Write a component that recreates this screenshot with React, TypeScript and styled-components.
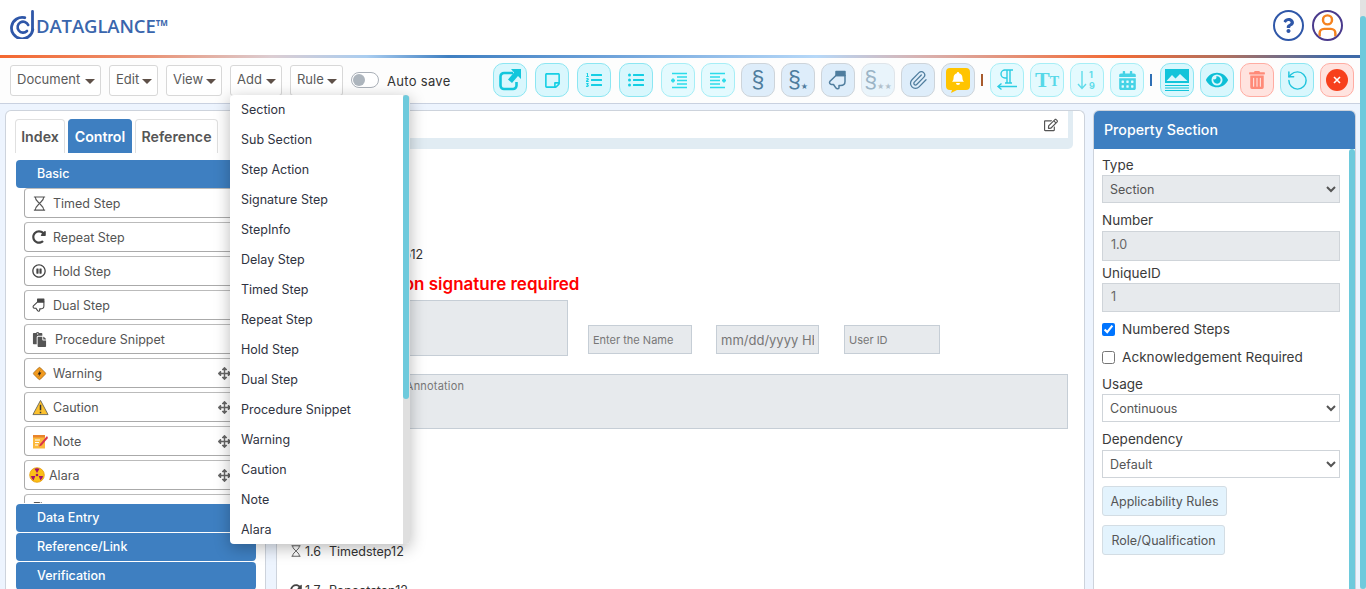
import React from "react";
import styled, { createGlobalStyle } from "styled-components";
import {
  FaArrowsAlt,
  FaCalendarAlt,
  FaEye,
  FaFile,
  FaListOl,
  FaListUl,
  FaPaste,
  FaQuestion,
  FaRedoAlt,
  FaRegEdit,
  FaRegPauseCircle,
  FaRegStickyNote,
  FaTrashAlt,
} from "react-icons/fa";
import { Paperclip, RotateCcw, User } from "lucide-react";

const GlobalStyle = createGlobalStyle`
  html, body { margin: 0; height: 100%; overflow: hidden; }
  body { font-family: Inter, "Open Sans", sans-serif; color: #333; background: #fff; }
  * { box-sizing: border-box; }
`;

const Shell = styled.div`
  position: relative;
  height: 100vh;
  overflow: hidden;
  padding-right: 6px;
  background: #edf4fe;
`;

/* scrollbars are overlays so they show in every browser mode */
const ScrollTrack = styled.div<{ $bg: string; $top?: number; $w: number }>`
  position: absolute;
  z-index: 5;
  top: ${(p) => p.$top ?? 0}px;
  right: 0;
  bottom: 0;
  width: ${(p) => p.$w}px;
  background: ${(p) => p.$bg};
`;

const ScrollThumb = styled.div<{ $from: number; $h: number }>`
  margin-top: ${(p) => p.$from}px;
  width: 6px;
  height: ${(p) => p.$h}px;
  background: #6ecadc;
  border-radius: 3px;
`;

const TopBar = styled.header`
  height: 58px;
  background: #fff;
  display: flex;
  align-items: center;
  justify-content: space-between;
  padding: 0 17px 6px 10px;
  border-bottom: 3px solid;
  border-image: linear-gradient(
      90deg,
      #f4672f 0,
      #ea9274 11%,
      #dccdd2 20%,
      #a9cdf0 27%,
      #3f7fc1 33%,
      #6fa3da 45%,
      #b6d8f8 60%,
      #d9b0ae 68%,
      #f26a35 82%,
      #b0705f 90%,
      #3f6aa8 98%
    )
    1;
`;

const Brand = styled.div`
  display: flex;
  align-items: center;
  gap: 1px;
`;

const BrandName = styled.span`
  font-family: "Open Sans", sans-serif;
  font-size: 18.5px;
  font-weight: 600;
  color: #3a66ad;
  letter-spacing: -0.1px;
  margin-top: 2px;
  sup { font-size: 8px; font-weight: 700; vertical-align: 7px; line-height: 0; }
`;

const TopActions = styled.div`
  display: flex;
  gap: 8px;
  margin-top: 1px;
`;

const RoundIcon = styled.div<{ $ring: string }>`
  width: 31px;
  height: 31px;
  border-radius: 50%;
  border: 2px solid ${(p) => p.$ring};
  display: flex;
  align-items: center;
  justify-content: center;
  overflow: hidden;
`;

const Toolbar = styled.div`
  height: 46px;
  background: #fdfdfd;
  border-bottom: 1px solid #c9d1e0;
  display: flex;
  align-items: center;
  padding: 0 6px 1px 10px;
`;

const MenuWrap = styled.div`
  position: relative;
  margin-right: 8px;
`;

const MenuButton = styled.button<{ $w: number }>`
  width: ${(p) => p.$w}px;
  height: 31px;
  background: #fff;
  border: 1px solid #d8d8d8;
  border-radius: 3px;
  font: 400 13px Inter, sans-serif;
  color: #5a5a5a;
  display: flex;
  align-items: center;
  justify-content: space-between;
  padding: 0 5px 2px 6px;
  &::after {
    content: "";
    border: 5px solid transparent;
    border-top-color: #5e5048;
    border-bottom-width: 0;
    margin-top: 4px;
  }
`;

const MenuPanel = styled.div`
  position: absolute;
  z-index: 10;
  top: 30px;
  left: 0;
  width: 180px;
  height: 449px;
  background: #fff;
  border-radius: 4px;
  box-shadow: 0 4px 16px rgba(0, 0, 0, 0.28);
  overflow: hidden;
`;

const MenuItem = styled.div`
  height: 30px;
  line-height: 29px;
  padding-left: 11px;
  font-size: 12.5px;
  color: #2f3341;
`;

const Toggle = styled.div`
  width: 28px;
  height: 16px;
  border: 1px solid #aab0b8;
  border-radius: 8px;
  background: #fff;
  padding: 1px;
  &::before {
    content: "";
    display: block;
    width: 12px;
    height: 12px;
    border-radius: 50%;
    background: #adb5bd;
  }
`;

const ToggleLabel = styled.span`
  margin-left: 8px;
  font-size: 13px;
  color: #333;
  letter-spacing: 0.3px;
  margin-top: 1px;
`;

const ToolRow = styled.div`
  margin-left: auto;
  display: flex;
  align-items: center;
  gap: 6px;
`;

const ToolGroup = styled.div`
  display: flex;
  gap: 8px;
`;

const palette = {
  cyan: ["#d9f7fd", "#8ce6f2"],
  pale: ["#e4fafe", "#a6eef6"],
  blue: ["#deedfa", "#cdd4da"],
  faded: ["#e9f4fb", "#dfe5ea"],
  red: ["#ffe3df", "#ffaca2"],
};

const ToolButton = styled.div<{ $kind: keyof typeof palette; $color?: string }>`
  width: 34px;
  height: 34px;
  border-radius: 10px;
  background: ${(p) => palette[p.$kind][0]};
  border: 1px solid ${(p) => palette[p.$kind][1]};
  color: ${(p) => p.$color || "#15cfe4"};
  display: flex;
  align-items: center;
  justify-content: center;
`;

const Separator = styled.span<{ $color: string; $after: number }>`
  width: 2px;
  height: 12px;
  background: ${(p) => p.$color};
  margin-right: ${(p) => p.$after}px;
`;

const SectionGlyph = styled.span<{ $fade?: boolean }>`
  font-family: "Liberation Sans", sans-serif;
  font-size: 23px;
  line-height: 1;
  color: ${(p) => (p.$fade ? "#9bb4c6" : "#4f7d9e")};
`;

const Stars = styled.span<{ $fade?: boolean }>`
  font-size: 7px;
  line-height: 1;
  align-self: flex-end;
  margin-bottom: 6px;
  color: ${(p) => (p.$fade ? "#b2c1cc" : "#4f7d9e")};
`;

const TextGlyph = styled.span<{ $size: number }>`
  font-family: "Liberation Serif", serif;
  font-weight: 700;
  font-size: ${(p) => p.$size}px;
  line-height: 1;
  margin-top: ${(p) => (22 - p.$size) / 2.4}px;
  color: #55d8e8;
`;

const Main = styled.main`
  height: 487px;
  padding: 6px 0 0 5px;
  display: grid;
  grid-template-columns: 261px 809px 261px;
  column-gap: 10px;
  grid-template-rows: 481px;
  & > :last-child { margin-left: -2px; }
`;

const Panel = styled.section`
  position: relative;
  background: #fff;
  border: 1px solid #cdd3dc;
  border-bottom: 0;
  border-radius: 6px 6px 0 0;
  overflow: hidden;
  display: flex;
  flex-direction: column;
`;

const Tabs = styled.div`
  display: flex;
  gap: 3px;
  padding: 8px 0 0 9px;
  margin-bottom: 7px;
`;

const Tab = styled.div<{ $active?: boolean; $w: number }>`
  width: ${(p) => p.$w}px;
  height: 34px;
  line-height: 34px;
  text-align: center;
  font-size: 14.2px;
  font-weight: 600;
  border-radius: 4px 4px 0 0;
  border: 1px solid ${(p) => (p.$active ? "#3e7fc1" : "#e0e0e0")};
  border-bottom: 0;
  background: ${(p) => (p.$active ? "#3e7fc1" : "#fff")};
  color: ${(p) => (p.$active ? "#fff" : "#555")};
`;

const Accordion = styled.div`
  flex: 1;
  min-height: 0;
  margin: 0 9px 1px 10px;
  display: flex;
  flex-direction: column;
  gap: 1px;
`;

const AccordionHead = styled.div`
  flex: none;
  height: 28px;
  line-height: 28px;
  padding-left: 21px;
  background: #3e7fc1;
  color: #fff;
  font-size: 12.5px;
  font-weight: 500;
  border-radius: 4px;
`;

const ControlList = styled.div`
  flex: 1;
  min-height: 0;
  overflow: hidden;
  margin-top: -1px;
  padding: 0 16px 0 8px;
  display: flex;
  flex-direction: column;
  gap: 4px;
`;

const ControlItem = styled.div<{ $icon?: number; $gap?: number }>`
  flex: none;
  height: 30px;
  border: 1px solid #aaa;
  border-top-color: #bbb;
  border-radius: 4px;
  display: flex;
  align-items: center;
  padding: 0 8px 0 ${(p) => (p.$icon === 18 ? 4 : 7)}px;
  font-size: 12.5px;
  color: #555;
  & > svg:first-child { flex: none; }
  & > span { margin-left: ${(p) => p.$gap ?? 7}px; flex: 1; }
`;

const CenterPanel = styled(Panel)`
  padding: 0 16px 0 13px;
`;

const DocHeader = styled.div`
  flex: none;
  height: 38px;
  margin: 0 -5px 0 -13px;
  padding: 0 5px 11px 0;
  background: #e1ecf3;
  border-radius: 0 0 5px 0;
`;

const DocHeaderInner = styled.div`
  height: 27px;
  background: #fff;
  display: flex;
  align-items: center;
  justify-content: flex-end;
  padding-right: 10px;
  color: #555;
  font-size: 14px;
`;

const StepRow = styled.div<{ $top: number }>`
  flex: none;
  height: 20px;
  margin-top: ${(p) => p.$top}px;
  display: flex;
  align-items: center;
  font-size: 12.5px;
  color: #333;
  & > svg { width: 12px; margin-right: 3px; flex: none; }
`;

const StepNumber = styled.span`
  width: 24px;
`;

const RequiredNote = styled.div`
  flex: none;
  margin-top: 8px;
  height: 24px;
  line-height: 24px;
  font-size: 17px;
  font-weight: 600;
  color: #f00;
  padding-left: 40px;
`;

const SignRow = styled.div`
  flex: none;
  margin-top: 4px;
  display: flex;
  align-items: flex-end;
`;

const SignBox = styled.div`
  width: 278px;
  height: 56px;
  background: #e7eaed;
  border: 1px solid #c6ced6;
`;

const SignInput = styled.input<{ $w: number; $ml: number; $big?: boolean }>`
  width: ${(p) => p.$w}px;
  height: 29px;
  margin: 0 0 2px ${(p) => p.$ml}px;
  padding: 0 4px;
  background: #e7eaed;
  border: 1px solid #c6ced6;
  font: 400 ${(p) => (p.$big ? 13 : 11)}px Inter, sans-serif;
  &::placeholder { color: #777; opacity: 1; }
`;

const Annotation = styled.textarea`
  flex: none;
  display: block;
  width: 778px;
  height: 55px;
  margin-top: 18px;
  padding: 4px 0 0 63px;
  background: #e7eaed;
  border: 1px solid #c6ced6;
  resize: none;
  font: 400 11px Inter, sans-serif;
  letter-spacing: 0.2px;
  &::placeholder { color: #777; opacity: 1; }
`;

const PropertyHead = styled.div`
  flex: none;
  height: 38px;
  line-height: 37px;
  padding-left: 10px;
  background: #3e7fc1;
  color: #fff;
  font-size: 14.2px;
  font-weight: 500;
`;

const PropertyBody = styled.div`
  flex: 1;
  min-height: 0;
  overflow: hidden;
  padding: 7px 8px 0 8px;
`;

const FieldLabel = styled.label<{ $top?: number }>`
  display: block;
  height: 18px;
  line-height: 18px;
  margin-top: ${(p) => p.$top ?? 0}px;
  font-size: 13.5px;
  color: #3a3a3a;
`;

const FieldSelect = styled.select<{ $locked?: boolean; $top: number }>`
  display: block;
  width: 238px;
  height: 28px;
  margin-top: ${(p) => p.$top}px;
  padding-left: 3px;
  background: ${(p) => (p.$locked ? "#e7eaed" : "#fff")};
  border: 1px solid #cfd4d9;
  border-radius: 0;
  font: 400 12.5px Inter, sans-serif;
  color: #555;
`;

const FieldInput = styled.input<{ $h: number; $top: number }>`
  display: block;
  width: 238px;
  height: ${(p) => p.$h}px;
  margin-top: ${(p) => p.$top}px;
  padding: 0 8px 3px;
  background: #e7eaed;
  border: 1px solid #cfd4d9;
  font: 400 12.5px Inter, sans-serif;
  color: #666;
`;

const CheckRow = styled.label<{ $top: number }>`
  display: flex;
  align-items: center;
  height: 18px;
  margin-top: ${(p) => p.$top}px;
  font-size: 13.6px;
  color: #3a3a3a;
  input { margin: 0 7px 0 0; width: 13px; height: 13px; }
`;

const RuleButton = styled.button<{ $w: number; $top: number }>`
  display: block;
  width: ${(p) => p.$w}px;
  height: 30px;
  margin-top: ${(p) => p.$top}px;
  background: #e3f3fd;
  border: 1px solid #d3dde4;
  border-radius: 3px;
  font: 400 12.5px Inter, sans-serif;
  color: #555;
  padding: 0;
`;

const LogoMark = () => (
  <svg width="25" height="29" viewBox="0 0 25 29" fill="none" stroke="#2f57a8" strokeLinecap="round">
    <path d="M22.800 19.500a10.700 10.700 0 1 1-8-11.800" strokeWidth="2.800" />
    <path d="M17 21a5.500 5.500 0 1 1 1.200-6" strokeWidth="2.600" />
    <path d="M22.500 1.500v18" strokeWidth="2.800" />
  </svg>
);

const Hourglass = ({ size = 15 }: { size?: number }) => (
  <svg width={size} height={size} viewBox="0 0 14 16" fill="none" stroke="#555" strokeWidth="1.200">
    <path d="M1 1h12M1 15h12M2.500 1c0 4 3.500 5.500 4.500 7-1 1.500-4.500 3-4.500 7M11.500 1c0 4-3.500 5.500-4.500 7 1 1.500 4.500 3 4.500 7" />
  </svg>
);

const HandIcon = ({ size, color }: { size: number; color: string }) => (
  <svg width={size} height={size} viewBox="0 0 20 20" fill="none" stroke={color} strokeWidth="1.500" strokeLinejoin="round">
    <path d="M8 1.500h9v4H8z" fill={color} />
    <path d="M8 5.500h9v6c0 2.500-2 4-4.500 4H11v2c0 1.500-2 1.800-3 .6L5.500 14.500H3.500C2 14.500.8 12.800 2 11.300L8 5.500z" />
  </svg>
);

const WarningIcon = () => (
  <svg width="15" height="15" viewBox="0 0 16 16">
    <rect x="3" y="3" width="10" height="10" rx="1.500" transform="rotate(45 8 8)" fill="#f19a1f" stroke="#8a5a12" strokeWidth=".6" />
    <path d="M9 4 6 9h2l-1 3 3-5H8z" fill="#222" />
  </svg>
);

const CautionIcon = () => (
  <svg width="17" height="17" viewBox="0 0 18 18">
    <path d="M9 1.500 17 16.500H1z" fill="#fcc12d" stroke="#6f6a5c" strokeWidth="1" strokeLinejoin="round" />
    <path d="M9 6v6M9 13.500v1.500" stroke="#333" strokeWidth="1.600" />
  </svg>
);

const NoteIcon = () => (
  <svg width="16" height="15" viewBox="0 0 16 15">
    <rect x="1" y="1" width="12" height="13.500" fill="#fbb93c" />
    <rect x="1" y="1" width="12" height="2.500" fill="#e8842c" />
    <path d="M3 6h5M3 8.500h4M3 11h3" stroke="#fff" strokeWidth="1" />
    <path d="M15 2 8 10l-1 2.500L9.500 11.500 16 4z" fill="#d8344c" />
  </svg>
);

const AlaraIcon = () => (
  <svg width="16" height="16" viewBox="0 0 16 16">
    <circle cx="8" cy="8" r="7.300" fill="#fbbf16" stroke="#e49b0a" strokeWidth=".8" />
    <circle cx="8" cy="8" r="1.300" fill="#a3126c" />
    <path d="M8 6 5.500 1.800a6 6 0 0 1 5 0zM6.300 9 2 9.100a6 6 0 0 0 2.500 4.400zM9.700 9 14 9.100a6 6 0 0 1-2.500 4.400z" fill="#a3126c" />
  </svg>
);

const ExportIcon = () => (
  <svg width="24" height="24" viewBox="0 0 24 24" fill="none">
    <path d="M15 5H6a3.500 3.500 0 0 0-3.500 3.500v9A3.500 3.500 0 0 0 6 21h9a3.500 3.500 0 0 0 3.500-3.500V14" stroke="#13c6dc" strokeWidth="2.600" />
    <path d="M23 1v10l-3-3-6 7-4-3.500 6-7-3-3.500z" fill="#13c6dc" />
  </svg>
);

const IndentIcon = ({ flip }: { flip?: boolean }) => (
  <svg width="17" height="17" viewBox="0 0 17 17" fill="none" stroke="#2bdcea" strokeWidth="1.300" transform={flip ? "scale(-1 1)" : undefined}>
    <path d="M2 1.500h15M7 5h10M7 8.500h10M7 12h10M2 15.500h15" />
    <path d="M1 8.500h4M3 6.500v4" strokeWidth="1.800" />
  </svg>
);

const BellTile = () => (
  <svg width="24" height="25" viewBox="0 0 24 25">
    <path d="M4 0h16a4 4 0 0 1 4 4v14a4 4 0 0 1-4 4h-9l-6 3 1-3H4a4 4 0 0 1-4-4V4a4 4 0 0 1 4-4z" fill="#ffc400" />
    <path d="M12 4a1.200 1.200 0 0 1 1.200 1.200c2.300.6 3.200 2.400 3.200 4.300 0 2.800 1.100 3.600 1.600 4.300H6c.5-.7 1.600-1.500 1.600-4.300 0-1.900.9-3.700 3.200-4.300A1.200 1.200 0 0 1 12 4zM10 15h4a2 2 0 0 1-4 0z" fill="#fff" />
  </svg>
);

const ParagraphIcon = () => (
  <svg width="24" height="24" viewBox="0 0 24 24" fill="none" stroke="#2bcde2" strokeWidth="1.400">
    <path d="M17 2H10a4 4 0 0 0 0 8h2V2M15 2v13M12 10v5M10 15h7M9 2h9" />
    <path d="M22 18.500H3M6.500 15.500 3 18.500l3.500 3" />
  </svg>
);

const SortIcon = () => (
  <svg width="22" height="24" viewBox="0 0 22 24" fill="none" stroke="#5fdcea" strokeWidth="1.400">
    <path d="M6 3v17M2 16l4 4.500 4-4.500" />
    <text x="13" y="10" fontSize="9" fontWeight="700" fill="#5fdcea" stroke="none" fontFamily="Inter, sans-serif">1</text>
    <text x="13" y="21" fontSize="9" fontWeight="700" fill="#5fdcea" stroke="none" fontFamily="Inter, sans-serif">9</text>
  </svg>
);

const PictureIcon = () => (
  <svg width="24" height="24" viewBox="0 0 24 24">
    <rect x="0" y="1" width="24" height="14" fill="#12c4da" />
    <path d="M1.500 13 7 7l3.500 3.500L15 6l7.500 7z" fill="#d9f7fd" />
    <path d="M0 17.500h24M0 20h24M0 22.500h24" stroke="#12c4da" strokeWidth="1" />
  </svg>
);

const CloseIcon = () => (
  <svg width="22" height="22" viewBox="0 0 22 22">
    <circle cx="11" cy="11" r="11" fill="#f7401c" />
    <path d="M8 8l6 6M14 8l-6 6" stroke="#fff" strokeWidth="1.600" />
  </svg>
);

const DragHandle = () => <FaArrowsAlt size={13} color="#666" />;

const addMenu = [
  "Section",
  "Sub Section",
  "Step Action",
  "Signature Step",
  "StepInfo",
  "Delay Step",
  "Timed Step",
  "Repeat Step",
  "Hold Step",
  "Dual Step",
  "Procedure Snippet",
  "Warning",
  "Caution",
  "Note",
  "Alara",
];

const App = () => {
  return (
    <Shell>
      <GlobalStyle />
      <TopBar>
        <Brand>
          <LogoMark />
          <BrandName>
            DATAGLANCE<sup>TM</sup>
          </BrandName>
        </Brand>
        <TopActions>
          <RoundIcon $ring="#2f57a8">
            <FaQuestion size={15} color="#2f57a8" />
          </RoundIcon>
          <RoundIcon $ring="#4a3a8c">
            <User size={27} color="#f5821f" strokeWidth={2.2} />
          </RoundIcon>
        </TopActions>
      </TopBar>

      <Toolbar>
        <MenuWrap>
          <MenuButton $w={91}>Document</MenuButton>
        </MenuWrap>
        <MenuWrap>
          <MenuButton $w={49}>Edit</MenuButton>
        </MenuWrap>
        <MenuWrap>
          <MenuButton $w={56}>View</MenuButton>
        </MenuWrap>
        <MenuWrap>
          <MenuButton $w={52}>Add</MenuButton>
          <MenuPanel>
            {addMenu.map((item) => (
              <MenuItem key={item}>{item}</MenuItem>
            ))}
            <ScrollTrack $bg="#dfdfdf" $w={7}>
              <ScrollThumb $from={0} $h={304} />
            </ScrollTrack>
          </MenuPanel>
        </MenuWrap>
        <MenuWrap>
          <MenuButton $w={53}>Rule</MenuButton>
        </MenuWrap>
        <Toggle />
        <ToggleLabel>Auto save</ToggleLabel>

        <ToolRow>
          <ToolGroup>
            <ToolButton $kind="cyan">
              <ExportIcon />
            </ToolButton>
            <ToolButton $kind="cyan">
              <FaRegStickyNote size={17} />
            </ToolButton>
            <ToolButton $kind="cyan">
              <FaListOl size={16} />
            </ToolButton>
            <ToolButton $kind="cyan">
              <FaListUl size={16} />
            </ToolButton>
            <ToolButton $kind="pale">
              <IndentIcon />
            </ToolButton>
          </ToolGroup>
          <ToolButton $kind="pale">
            <IndentIcon flip />
          </ToolButton>
          <ToolButton $kind="blue">
            <SectionGlyph>§</SectionGlyph>
          </ToolButton>
          <ToolButton $kind="blue">
            <SectionGlyph>§</SectionGlyph>
            <Stars>★</Stars>
          </ToolButton>
          <ToolButton $kind="blue">
            <HandIcon size={20} color="#4f7d9e" />
          </ToolButton>
          <ToolButton $kind="faded">
            <SectionGlyph $fade>§</SectionGlyph>
            <Stars $fade>★★</Stars>
          </ToolButton>
          <ToolButton $kind="blue" $color="#4f7d9e">
            <Paperclip size={20} strokeWidth={1.5} />
          </ToolButton>
          <ToolButton $kind="blue">
            <BellTile />
          </ToolButton>
          <Separator $color="#a85a2c" $after={1} />
          <ToolButton $kind="pale">
            <ParagraphIcon />
          </ToolButton>
          <ToolButton $kind="pale">
            <TextGlyph $size={22}>T</TextGlyph>
            <TextGlyph $size={14}>T</TextGlyph>
          </ToolButton>
          <ToolButton $kind="pale">
            <SortIcon />
          </ToolButton>
          <ToolButton $kind="pale" $color="#45d3e6">
            <FaCalendarAlt size={19} />
          </ToolButton>
          <Separator $color="#2f6fb5" $after={2} />
          <ToolButton $kind="cyan">
            <PictureIcon />
          </ToolButton>
          <ToolButton $kind="cyan" $color="#0dbfd6">
            <FaEye size={22} />
          </ToolButton>
          <ToolButton $kind="red" $color="#ff8a78">
            <FaTrashAlt size={18} />
          </ToolButton>
          <ToolButton $kind="cyan" $color="#1fc4dc">
            <RotateCcw size={23} strokeWidth={1.5} />
          </ToolButton>
          <ToolButton $kind="red">
            <CloseIcon />
          </ToolButton>
        </ToolRow>
      </Toolbar>

      <Main>
        <Panel>
          <Tabs>
            <Tab $w={50}>Index</Tab>
            <Tab $w={64} $active>
              Control
            </Tab>
            <Tab $w={83}>Reference</Tab>
          </Tabs>
          <Accordion>
            <AccordionHead>Basic</AccordionHead>
            <ControlList>
              <ControlItem $gap={6}>
                <Hourglass />
                <span>Timed Step</span>
              </ControlItem>
              <ControlItem>
                <FaRedoAlt size={14} color="#444" />
                <span>Repeat Step</span>
              </ControlItem>
              <ControlItem>
                <FaRegPauseCircle size={14} color="#444" />
                <span>Hold Step</span>
              </ControlItem>
              <ControlItem>
                <HandIcon size={14} color="#444" />
                <span>Dual Step</span>
              </ControlItem>
              <ControlItem $gap={8}>
                <FaPaste size={15} color="#555" />
                <span>Procedure Snippet</span>
              </ControlItem>
              <ControlItem $gap={6}>
                <WarningIcon />
                <span>Warning</span>
                <DragHandle />
              </ControlItem>
              <ControlItem $gap={4}>
                <CautionIcon />
                <span>Caution</span>
                <DragHandle />
              </ControlItem>
              <ControlItem $gap={5}>
                <NoteIcon />
                <span>Note</span>
                <DragHandle />
              </ControlItem>
              <ControlItem $icon={18} $gap={4}>
                <AlaraIcon />
                <span>Alara</span>
                <DragHandle />
              </ControlItem>
              <ControlItem>
                <FaFile size={14} color="#555" />
              </ControlItem>
            </ControlList>
            <AccordionHead>Data Entry</AccordionHead>
            <AccordionHead>Reference/Link</AccordionHead>
            <AccordionHead>Verification</AccordionHead>
          </Accordion>
        </Panel>

        <CenterPanel>
          <DocHeader>
            <DocHeaderInner>
              <FaRegEdit />
            </DocHeaderInner>
          </DocHeader>
          <StepRow $top={95}>
            <Hourglass size={12} />
            <StepNumber>1.3</StepNumber>
            Signaturestep12
          </StepRow>
          <RequiredNote>Completion signature required</RequiredNote>
          <SignRow>
            <SignBox />
            <SignInput $w={104} $ml={20} placeholder="Enter the Name" />
            <SignInput $w={103} $ml={24} $big placeholder="mm/dd/yyyy HH:MM" />
            <SignInput $w={96} $ml={25} placeholder="User ID" />
          </SignRow>
          <Annotation placeholder="Enter the Annotation" />
          <StepRow $top={112}>
            <Hourglass size={12} />
            <StepNumber>1.6</StepNumber>
            Timedstep12
          </StepRow>
          <StepRow $top={19}>
            <FaRedoAlt size={12} color="#444" />
            <StepNumber>1.7</StepNumber>
            Repeatstep12
          </StepRow>
        </CenterPanel>

        <Panel>
          <PropertyHead>Property Section</PropertyHead>
          <PropertyBody>
            <FieldLabel>Type</FieldLabel>
            <FieldSelect $locked $top={1} defaultValue="Section">
              <option>Section</option>
            </FieldSelect>
            <FieldLabel $top={8}>Number</FieldLabel>
            <FieldInput $h={30} $top={2} readOnly value="1.0" />
            <FieldLabel $top={3}>UniqueID</FieldLabel>
            <FieldInput $h={29} $top={1} readOnly value="1" />
            <CheckRow $top={8}>
              <input type="checkbox" defaultChecked />
              Numbered Steps
            </CheckRow>
            <CheckRow $top={10}>
              <input type="checkbox" />
              Acknowledgement Required
            </CheckRow>
            <FieldLabel $top={9}>Usage</FieldLabel>
            <FieldSelect $top={1} defaultValue="Continuous">
              <option>Continuous</option>
            </FieldSelect>
            <FieldLabel $top={8}>Dependency</FieldLabel>
            <FieldSelect $top={2} defaultValue="Default">
              <option>Default</option>
            </FieldSelect>
            <RuleButton $w={125} $top={8}>
              Applicability Rules
            </RuleButton>
            <RuleButton $w={123} $top={9}>
              Role/Qualification
            </RuleButton>
          </PropertyBody>
          <ScrollTrack $bg="#fff" $top={38} $w={6}>
            <ScrollThumb $from={0} $h={443} />
          </ScrollTrack>
        </Panel>
      </Main>

      <ScrollTrack $bg="#e2e2e2" $w={6}>
        <ScrollThumb $from={16} $h={573} />
      </ScrollTrack>
    </Shell>
  );
};

export default App;
